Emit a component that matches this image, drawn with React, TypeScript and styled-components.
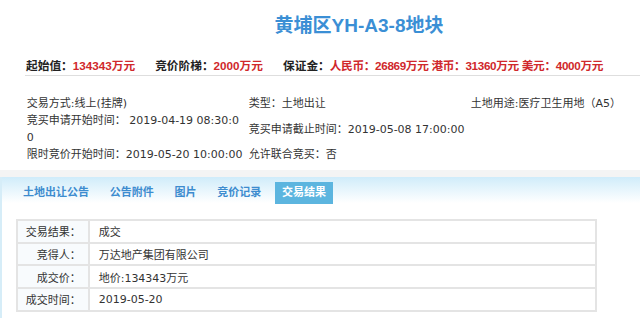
import styled, { createGlobalStyle } from 'styled-components';

const GlobalStyle = createGlobalStyle`
	html,
	body {
		margin: 0;
		padding: 0;
		background: #fff;
	}
	body {
		width: 640px;
		height: 318px;
		overflow: hidden;
	}
`;

const Page = styled.div`
	width: 640px;
	font-family: 'DejaVu Sans', 'Noto Sans CJK SC', sans-serif;
	color: #333;
`;

const Title = styled.h1`
	margin: 0;
	padding-left: 78px;
	height: 51px;
	line-height: 51px;
	text-align: center;
	font-family: 'Liberation Sans', 'Noto Sans CJK SC', sans-serif;
	font-size: 19px;
	font-weight: bold;
	color: #3b8fd5;
`;

const Summary = styled.div`
	margin-left: 25px;
	padding: 8px 0 2px 1px;
	line-height: 14px;
	border-bottom: 1px solid #dedede;
	font-family: 'Liberation Sans', 'Noto Sans CJK SC', sans-serif;
	font-size: 11.7px;
	font-weight: bold;
	color: #222;
	white-space: nowrap;
`;

const Field = styled.span`
	margin-right: 20px;
`;

const Money = styled.span<{ $compact?: boolean }>`
	color: #d0282c;
	letter-spacing: ${(p) => (p.$compact ? '-0.35px' : '0')};
`;

const InfoGrid = styled.div`
	display: grid;
	grid-template-columns: 222px 222px 1fr;
	align-items: center;
	padding: 19px 0 7px 24.7px;
	font-size: 11px;
	line-height: 17px;
	color: #333;
`;

const InfoCell = styled.div`
	padding: 0 2px;
	word-break: break-all;
`;

const Band = styled.div`
	height: 7px;
	background: #f4f4f4;
`;

const Panel = styled.div`
	border-left: 2px solid #d6edf8;
	height: 141px;
`;

const TabBar = styled.div`
	display: flex;
	gap: 7.4px;
	padding: 5.4px 0 0 14.3px;
	background: linear-gradient(to bottom, #d0ecfa 0px, #ffffff 26px);
`;

const Tab = styled.div<{ $active?: boolean }>`
	padding: 0 6.7px;
	line-height: 21.6px;
	font-family: 'Liberation Sans', 'Noto Sans CJK SC', sans-serif;
	font-size: 11px;
	font-weight: bold;
	color: ${(p) => (p.$active ? '#fff' : '#3d8ccf')};
	background: ${(p) => (p.$active ? '#5cb5df' : 'transparent')};
`;

const ResultTable = styled.table`
	margin: 15.2px 0 0 13.7px;
	width: 581px;
	border-collapse: collapse;
	font-size: 11px;
	color: #333;
`;

const Row = styled.tr`
	height: 22.6px;
`;

const Label = styled.td`
	width: 63px;
	padding: 0 7.6px 0 0;
	text-align: right;
	background: #f8fbfd;
	border: 2px solid #e4e4e4;
`;

const Value = styled.td`
	padding: 0 0 0 8.4px;
	border: 2px solid #e4e4e4;
`;

const tabs = ['土地出让公告', '公告附件', '图片', '竞价记录', '交易结果'];

const results = [
	['交易结果：', '成交'],
	['竞得人：', '万达地产集团有限公司'],
	['成交价：', '地价:134343万元'],
	['成交时间：', '2019-05-20'],
];

export default function App() {
	return (
		<Page>
			<GlobalStyle />
			<Title>黄埔区YH-A3-8地块</Title>
			<Summary>
				<Field>
					起始值：<Money>134343万元</Money>
				</Field>
				<Field>
					竞价阶梯：<Money>2000万元</Money>
				</Field>
				<Field>
					保证金：
					<Money $compact>人民币：26869万元 港币：31360万元 美元：4000万元</Money>
				</Field>
			</Summary>
			<InfoGrid>
				<InfoCell>交易方式:线上(挂牌)</InfoCell>
				<InfoCell>类型：土地出让</InfoCell>
				<InfoCell>土地用途:医疗卫生用地（A5）</InfoCell>
				<InfoCell>竞买申请开始时间： 2019-04-19 08:30:00</InfoCell>
				<InfoCell>竞买申请截止时间：2019-05-08 17:00:00</InfoCell>
				<InfoCell />
				<InfoCell>限时竞价开始时间：2019-05-20 10:00:00</InfoCell>
				<InfoCell>允许联合竞买：否</InfoCell>
				<InfoCell />
			</InfoGrid>
			<Band />
			<Panel>
				<TabBar>
					{tabs.map((t, i) => (
						<Tab key={t} $active={i === tabs.length - 1}>
							{t}
						</Tab>
					))}
				</TabBar>
				<ResultTable>
					<tbody>
						{results.map(([k, v]) => (
							<Row key={k}>
								<Label>{k}</Label>
								<Value>{v}</Value>
							</Row>
						))}
					</tbody>
				</ResultTable>
			</Panel>
		</Page>
	);
}
